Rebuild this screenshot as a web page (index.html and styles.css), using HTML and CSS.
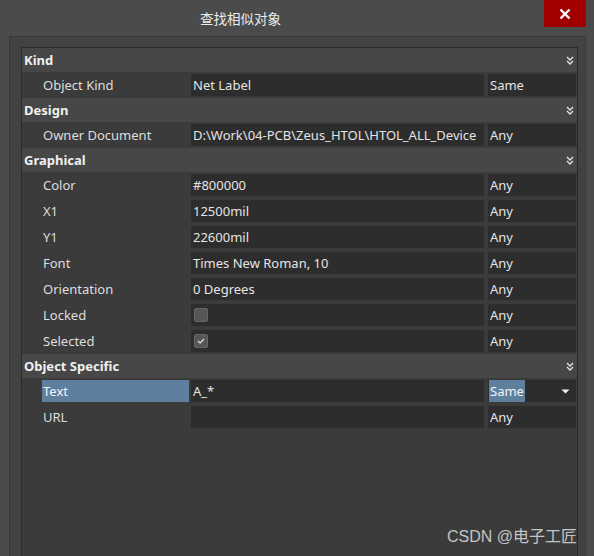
FILE: index.html
```html
<!DOCTYPE html>
<html>
<head>
<meta charset="utf-8">
<link rel="stylesheet" href="styles.css">
</head>
<body>
<div class="window">
  <div class="titlebar">
    <div class="title">查找相似对象</div>
    <div class="close"><svg width="12" height="12" viewBox="0 0 12 12"><path d="M1.5 1.5 L10.5 10.5 M10.5 1.5 L1.5 10.5" stroke="#fff" stroke-width="2.4" fill="none"/></svg></div>
  </div>
  <div class="panel">
    <div class="grid">
      <div class="hdr"><span>Kind</span><svg class="chev" width="8" height="9" viewBox="0 0 8 9"><path d="M1 1 L4 4 L7 1 M1 5 L4 8 L7 5" stroke="#e6e6e6" stroke-width="1.3" fill="none"/></svg></div>
      <div class="row"><div class="name"><span class="lbl">Object Kind</span></div><div class="cell">Net Label</div><div class="cell third">Same</div></div>

      <div class="hdr"><span>Design</span><svg class="chev" width="8" height="9" viewBox="0 0 8 9"><path d="M1 1 L4 4 L7 1 M1 5 L4 8 L7 5" stroke="#e6e6e6" stroke-width="1.3" fill="none"/></svg></div>
      <div class="row"><div class="name"><span class="lbl">Owner Document</span></div><div class="cell">D:\Work\04-PCB\Zeus_HTOL\HTOL_ALL_Device</div><div class="cell third">Any</div></div>

      <div class="hdr"><span>Graphical</span><svg class="chev" width="8" height="9" viewBox="0 0 8 9"><path d="M1 1 L4 4 L7 1 M1 5 L4 8 L7 5" stroke="#e6e6e6" stroke-width="1.3" fill="none"/></svg></div>
      <div class="row"><div class="name"><span class="lbl">Color</span></div><div class="cell">#800000</div><div class="cell third">Any</div></div>
      <div class="row"><div class="name"><span class="lbl">X1</span></div><div class="cell">12500mil</div><div class="cell third">Any</div></div>
      <div class="row"><div class="name"><span class="lbl">Y1</span></div><div class="cell">22600mil</div><div class="cell third">Any</div></div>
      <div class="row"><div class="name"><span class="lbl">Font</span></div><div class="cell">Times New Roman, 10</div><div class="cell third">Any</div></div>
      <div class="row"><div class="name"><span class="lbl">Orientation</span></div><div class="cell">0 Degrees</div><div class="cell third">Any</div></div>
      <div class="row"><div class="name"><span class="lbl">Locked</span></div><div class="cell"><span class="check"></span></div><div class="cell third">Any</div></div>
      <div class="row"><div class="name"><span class="lbl">Selected</span></div><div class="cell"><span class="check"><svg width="10" height="10" viewBox="0 0 10 10"><path d="M2 5 L4.2 7 L8 3" stroke="#e8e8e8" stroke-width="1.1" fill="none"/></svg></span></div><div class="cell third">Any</div></div>

      <div class="hdr"><span>Object Specific</span><svg class="chev" width="8" height="9" viewBox="0 0 8 9"><path d="M1 1 L4 4 L7 1 M1 5 L4 8 L7 5" stroke="#e6e6e6" stroke-width="1.3" fill="none"/></svg></div>
      <div class="row"><div class="name"><span class="lbl sel">Text</span></div><div class="cell">A_*</div><div class="cell third drop"><span class="seltext">Same</span><svg width="9" height="5" viewBox="0 0 9 5"><path d="M0.5 0.5 L8.5 0.5 L4.5 4.5 Z" fill="#f2f2f2"/></svg></div></div>
      <div class="row"><div class="name"><span class="lbl">URL</span></div><div class="cell"></div><div class="cell third">Any</div></div>
    </div>
  </div>
  <div class="watermark">CSDN @电子工匠</div>
</div>
</body>
</html>
```

FILE: styles.css
```css
html, body {
  margin: 0;
  padding: 0;
  background: #4b4b4b;
}
.window {
  position: relative;
  width: 594px;
  height: 556px;
  overflow: hidden;
  background: #4b4b4b;
  font-family: "Noto Sans", "Open Sans", sans-serif;
  font-size: 13px;
  color: #e2e2e2;
}
.titlebar {
  height: 36px;
  display: flex;
  align-items: center;
}
.title {
  padding-left: 200px;
  font-family: "Noto Sans CJK SC", sans-serif;
  font-size: 13.5px;
  color: #ececec;
  margin-top: -1px;
}
.close {
  position: absolute;
  left: 544px;
  top: 0;
  width: 42px;
  height: 27px;
  background: #a00000;
  display: flex;
  align-items: center;
  justify-content: center;
}
.panel {
  margin-left: 9px;
  width: 557px;
  height: 509px;
  border-top: 1px solid #373737;
  border-left: 1px solid #373737;
  border-right: 1px solid #383838;
  background: #424242;
  padding: 10px 7px 0 11px;
}
.grid {
  height: 100%;
  box-sizing: border-box;
  border: 1px solid #2b2b2b;
  border-bottom: none;
  background: #3b3b3b;
  display: flex;
  flex-direction: column;
}
.hdr {
  height: 24px;
  flex: none;
  background: #474747;
  display: flex;
  align-items: center;
  justify-content: space-between;
  padding: 0 3px 0 2px;
  font-weight: bold;
  color: #f0f0f0;
}
.row {
  height: 26px;
  flex: none;
  box-sizing: border-box;
  padding: 2px 1px 2px 0;
  display: grid;
  grid-template-columns: 169px 293px 92px;
  background: #3b3b3b;
}
.name {
  padding-left: 20px;
  padding-right: 2px;
  display: flex;
}
.lbl {
  flex: 1;
  display: flex;
  align-items: center;
  padding-left: 1px;
  color: #dedede;
}
.lbl.sel {
  background: #5f7f9f;
  color: #f4f4f4;
}
.cell {
  background: #2d2d2d;
  display: flex;
  align-items: center;
  padding-left: 2px;
  white-space: nowrap;
  overflow: hidden;
  color: #e4e4e4;
}
.third {
  margin-left: 4px;
}
.drop {
  justify-content: space-between;
  padding-left: 1px;
  padding-right: 6px;
}
.seltext {
  background: #5f7f9f;
  height: 22px;
  display: flex;
  align-items: center;
  padding: 0 1px;
  color: #f4f4f4;
}
.check {
  width: 14px;
  height: 14px;
  box-sizing: border-box;
  margin-left: 1px;
  border-radius: 2px;
  background: #565656;
  border: 1px solid #666;
  display: flex;
  align-items: center;
  justify-content: center;
}
.watermark {
  position: absolute;
  right: 17px;
  bottom: 9px;
  font-family: "Liberation Sans", "Noto Sans CJK SC", sans-serif;
  font-size: 16px;
  color: #c4c4c4;
}
```
